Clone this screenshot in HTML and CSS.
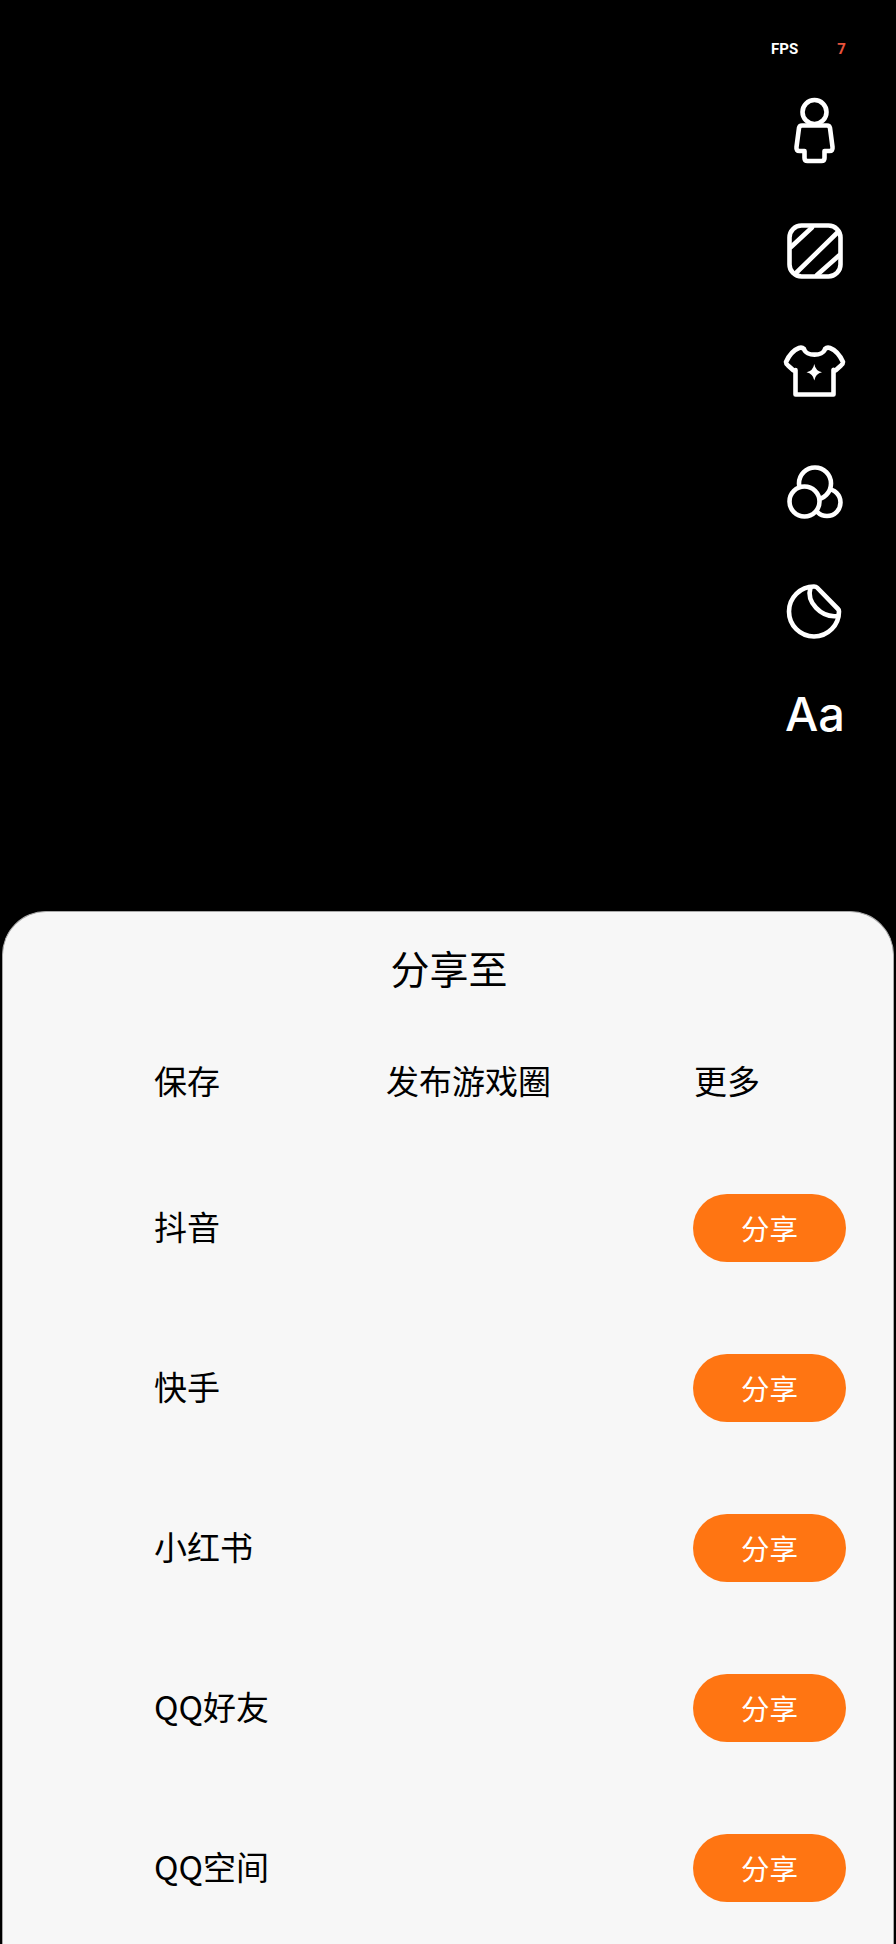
FILE: index.html
```html
<!DOCTYPE html>
<html lang="zh-CN">

<head>
    <meta charset="UTF-8">
    <meta name="viewport" content="width=device-width, initial-scale=1.0">
    <title>分享至</title>
    <link rel="stylesheet" href="styles.css">
</head>

<body>
    <div class="stage">
        <div class="fps">
            <span>FPS</span>
            <span class="fps-num">7</span>
        </div>
        <div class="tools">
            <svg class="tool" viewBox="0 0 68 68">
                <circle cx="33.5" cy="16" r="12"/>
                <path d="M21 29.5H46Q48.5 29.5 49 32L51.5 51Q52 55 48.5 55H43.5V62Q43.500 65 40.500 65H26.500Q23.500 65 23.500 62V55H18.500Q15 55 15.500 51L18 32Q18.500 29.500 21 29.500Z"/>
            </svg>
            <svg class="tool" viewBox="0 0 68 68">
                <rect x="8.500" y="8.500" width="51" height="51" rx="12"/>
                <path d="M10 30L31 10.500M14 57L57 15M36 58L58 38.500"/>
            </svg>
            <svg class="tool" viewBox="0 0 68 68">
                <path d="M23 12C25 19.500 42 19.500 44 12Q46 10 49 11Q57 14 62 25Q62 27 60 28.500L55 33Q53.500 34 52.500 33V57.500H14.500V33Q13.500 34 12 33L7 28.500Q5 27 5 25Q10 14 18 11Q21 10 23 12Z"/>
                <path class="solid" d="M33.300 27Q34.500 34 41 35.200Q34.500 36.400 33.300 43.500Q32 36.400 25.500 35.200Q32 34 33.300 27Z"/>
            </svg>
            <svg class="tool" viewBox="0 0 68 68">
                <circle class="cover" cx="46" cy="44.500" r="13.500"/>
                <circle class="cover" cx="34" cy="25.500" r="16"/>
                <circle class="cover" cx="23.500" cy="43.500" r="15"/>
            </svg>
            <svg class="tool" viewBox="0 0 68 68">
                <path d="M33 8.500A25 25 0 1 0 58 33.500Q58 32 57 31L36 9.500Q35 8.500 33 8.500Z"/>
                <path d="M29.500 9.500C25 24 40 40 56.500 38"/>
            </svg>
            <div class="tool-text">Aa</div>
        </div>
    </div>

    <div class="sheet">
        <div class="sheet-title">分享至</div>
        <div class="options">
            <span>保存</span>
            <span>发布游戏圈</span>
            <span>更多</span>
        </div>
        <div class="row">
            <span class="row-name">抖音</span>
            <div class="share-btn">分享</div>
        </div>
        <div class="row">
            <span class="row-name">快手</span>
            <div class="share-btn">分享</div>
        </div>
        <div class="row">
            <span class="row-name">小红书</span>
            <div class="share-btn">分享</div>
        </div>
        <div class="row">
            <span class="row-name">QQ好友</span>
            <div class="share-btn">分享</div>
        </div>
        <div class="row">
            <span class="row-name">QQ空间</span>
            <div class="share-btn">分享</div>
        </div>
    </div>
</body>

</html>
```

FILE: styles.css
```css
html,
body {
    margin: 0;
    height: 1944px;
    overflow: hidden;
    background: #000;
    font-family: "Noto Sans CJK SC", "Noto Sans", sans-serif;
}

.stage {
    height: 911px;
    display: flex;
    flex-direction: column;
    align-items: flex-end;
    padding-right: 48px;
    box-sizing: border-box;
}

.fps {
    display: flex;
    gap: 39px;
    width: 72px;
    margin-top: 39px;
    margin-right: 5px;
    height: 20px;
    line-height: 20px;
    color: #fff;
    font-family: Roboto, sans-serif;
    font-size: 15px;
    font-weight: 700;
}

.fps-num {
    color: #e8533c;
}

.tools {
    display: flex;
    flex-direction: column;
    align-items: center;
    gap: 52.5px;
    margin-top: 37px;
    margin-right: -1px;
    width: 68px;
}

.tool {
    width: 68px;
    height: 68px;
    display: block;
    fill: none;
    stroke: #fff;
    stroke-width: 4.6;
    stroke-linecap: round;
    stroke-linejoin: round;
}

.tool .solid {
    fill: #fff;
    stroke: none;
}

.tool .cover {
    fill: #000;
}

.tool-text {
    margin-top: -19px;
    height: 68px;
    line-height: 68px;
    color: #fff;
    font-family: Inter, sans-serif;
    font-size: 47px;
    font-weight: 500;
    white-space: nowrap;
}

.sheet {
    height: 1033px;
    margin: 0 2px;
    box-sizing: border-box;
    background: #f7f7f7;
    border: 1px solid #a8a8a8;
    border-bottom: none;
    border-radius: 44px 44px 0 0;
    color: #000;
}

.sheet-title {
    margin-top: 28px;
    padding-left: 2px;
    height: 54px;
    line-height: 54px;
    text-align: center;
    font-size: 39px;
}

.options {
    display: grid;
    grid-template-columns: 232px 308px auto;
    margin-top: 61px;
    padding-left: 151px;
    height: 50px;
    line-height: 50px;
    font-size: 33px;
}

.row {
    display: flex;
    align-items: center;
    justify-content: space-between;
    height: 160px;
    padding: 0 47px 0 151px;
    font-size: 33px;
}

.row-name {
    margin-bottom: 5px;
}

.options + .row {
    margin-top: 43px;
}

.share-btn {
    width: 153px;
    height: 68px;
    line-height: 68px;
    border-radius: 34px;
    background: #ff7512;
    color: #fff;
    text-align: center;
    font-size: 28.500px;
}
```
